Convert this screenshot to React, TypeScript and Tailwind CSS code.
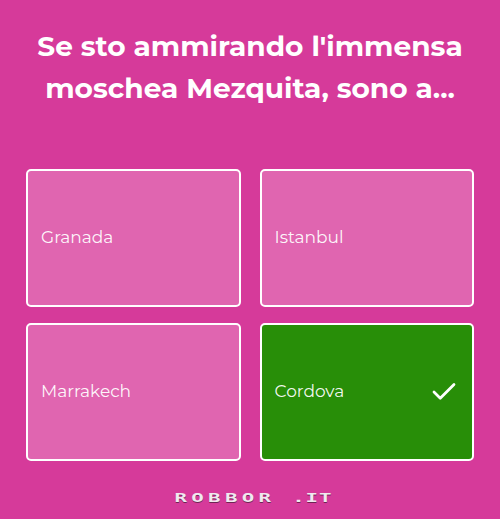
import { Check } from "lucide-react";

const answers = [
  { label: "Granada", correct: false },
  { label: "Istanbul", correct: false },
  { label: "Marrakech", correct: false },
  { label: "Cordova", correct: true },
];

const App = () => {
  return (
    <div
      className="w-[500px] h-[519px] bg-[#d63a9a] flex flex-col"
      style={{ fontFamily: "Montserrat, 'Open Sans', sans-serif" }}
    >
      {/* Question */}
      <div className="h-[169px] pt-[25px] px-2">
        <h1 className="text-white font-bold text-[28px] leading-[42px] text-center">
          Se sto ammirando l'immensa
          <br />
          moschea Mezquita, sono a...
        </h1>
      </div>

      {/* Answers */}
      <div className="grid grid-cols-2 gap-x-[19px] gap-y-4 px-[26px]">
        {answers.map((a) => (
          <div
            key={a.label}
            className={`h-[138px] rounded-[5px] border-2 border-white flex items-center justify-between pl-[13px] pr-[13px] ${
              a.correct ? "bg-[#288e08]" : "bg-[#e065b0]"
            }`}
          >
            <span className="text-white/95 text-[17px]">{a.label}</span>
            {a.correct && <Check className="text-white w-[30px] h-[30px]" strokeWidth={2.2} />}
          </div>
        ))}
      </div>

      {/* Footer logo */}
      <div className="flex-1 flex items-center justify-center pt-[16px] pl-[6px]">
        <div
          className="flex text-[#f1e9ef] font-bold text-[13px] scale-x-[1.6] whitespace-pre"
          style={{ fontFamily: "'DejaVu Sans Mono', monospace", textShadow: "0 1px 0 #6e2453" }}
        >
          <span className="tracking-[2.7px]">ROBBOR </span>
          <span className="tracking-[0.5px]">.IT</span>
        </div>
      </div>
    </div>
  );
};

export default App;
